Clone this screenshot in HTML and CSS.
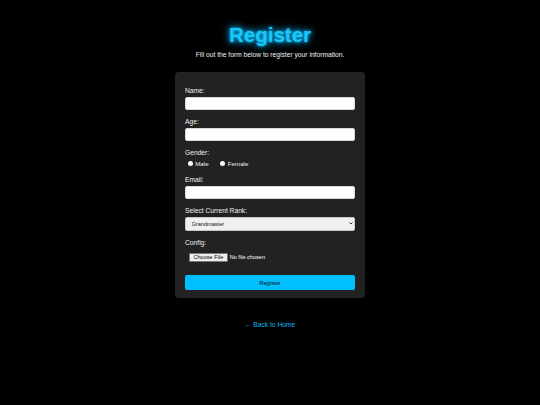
FILE: index.html
```html
<!DOCTYPE html>
<html lang="en">
<head>
<meta charset="utf-8">
<title>Register</title>
<link rel="stylesheet" href="styles.css">
</head>
<body>
  <h1 class="title">Register</h1>
  <p class="subtitle">Fill out the form below to register your information.</p>
  <form class="card">
    <label class="label" for="name">Name:</label>
    <input class="field" id="name" type="text">

    <label class="label" for="age">Age:</label>
    <input class="field" id="age" type="text">

    <span class="label">Gender:</span>
    <div class="radios">
      <input class="radio" type="radio" name="g" id="male"><label class="radio-label" for="male">Male</label>
      <input class="radio" type="radio" name="g" id="female"><label class="radio-label" for="female">Female</label>
    </div>

    <label class="label" for="email">Email:</label>
    <input class="field" id="email" type="email">

    <label class="label" for="rank">Select Current Rank:</label>
    <div class="select-wrap">
      <select class="select" id="rank">
        <option>Grandmaster</option>
      </select>
      <svg class="chevron" viewBox="0 0 8 5" width="4" height="2.5"><path d="M1 1 L4 4 L7 1" fill="none" stroke="#222" stroke-width="1.8"/></svg>
    </div>

    <label class="label" for="config">Config:</label>
    <input class="file" id="config" type="file">

    <button class="submit" type="button">Register</button>
  </form>
  <a class="back" href="#">← Back to Home</a>
</body>
</html>
```

FILE: styles.css
```css
html, body {
  margin: 0;
  padding: 0;
  background: #000;
}
body {
  font-family: "Liberation Sans", Arial, sans-serif;
  color: #fff;
  display: flex;
  flex-direction: column;
  align-items: center;
}
.title {
  margin: 23.6px 0 4.6px;
  font-size: 20.5px;
  line-height: 22.9px;
  font-weight: bold;
  color: #1cc6f6;
  text-shadow: 0 0 3px #00bfff, 0 0 7px #0aa6dc, 0 0 12px rgba(0, 170, 230, 0.6);
}
.subtitle {
  margin: 0 0 13.75px;
  font-size: 6.7px;
  line-height: 7.15px;
  color: #f0f0f0;
}
.card {
  box-sizing: border-box;
  width: 190px;
  margin: 0;
  padding: 14.8px 10px 8.5px;
  background: #222;
  border-radius: 4px;
  display: flex;
  flex-direction: column;
}
.label {
  display: block;
  font-size: 6.7px;
  line-height: 7.2px;
  color: #f0f0f0;
  margin-bottom: 2.5px;
}
.field {
  box-sizing: border-box;
  width: 100%;
  height: 13px;
  margin: 0 0 8.3px;
  padding: 0 4px;
  border: 0.5px solid #d8d8d8;
  border-radius: 2px;
  background: #fff;
  font-size: 6px;
}
.radios {
  display: flex;
  align-items: center;
  height: 9px;
  margin-bottom: 8.6px;
}
.radio {
  appearance: none;
  -webkit-appearance: none;
  box-sizing: border-box;
  width: 5px;
  height: 5px;
  margin: 0 2.7px 0 2.5px;
  border-radius: 50%;
  background: #fff;
  border: none;
}
.radio-label {
  font-size: 6.2px;
  line-height: 7px;
  padding-top: 1.5px;
  color: #f0f0f0;
  margin-right: 9px;
}
.select-wrap {
  position: relative;
  margin-bottom: 8.4px;
}
.select {
  appearance: none;
  -webkit-appearance: none;
  box-sizing: border-box;
  display: block;
  width: 100%;
  height: 14.3px;
  margin: 0;
  padding: 0 5.5px;
  border: 0.5px solid #c8c8c8;
  border-radius: 2px;
  background: #f0f0f0;
  color: #111;
  font-family: "Liberation Sans", Arial, sans-serif;
  font-size: 5.6px;
}
.chevron {
  position: absolute;
  right: 2.5px;
  top: 5.2px;
}
.file {
  box-sizing: border-box;
  width: 100%;
  padding: 4px;
  margin: 0 0 9.7px;
  font-family: "Liberation Sans", Arial, sans-serif;
  font-size: 5.6px;
  color: #fff;
}
.file::file-selector-button {
  box-sizing: border-box;
  height: 8.4px;
  padding: 0 3.4px;
  margin-right: 2px;
  font: inherit;
  color: #000;
  background: #efefef;
  border: 0.5px solid #767676;
  border-radius: 1px;
}
.submit {
  box-sizing: border-box;
  width: 100%;
  height: 14.7px;
  margin: 0;
  padding: 0;
  border: none;
  border-radius: 2px;
  background: #00bfff;
  color: #0a0a0a;
  font-family: "Liberation Sans", Arial, sans-serif;
  font-size: 5.8px;
}
.back {
  margin-top: 22.9px;
  font-size: 6.7px;
  line-height: 7.2px;
  color: #15b4ee;
  text-decoration: none;
}
```
